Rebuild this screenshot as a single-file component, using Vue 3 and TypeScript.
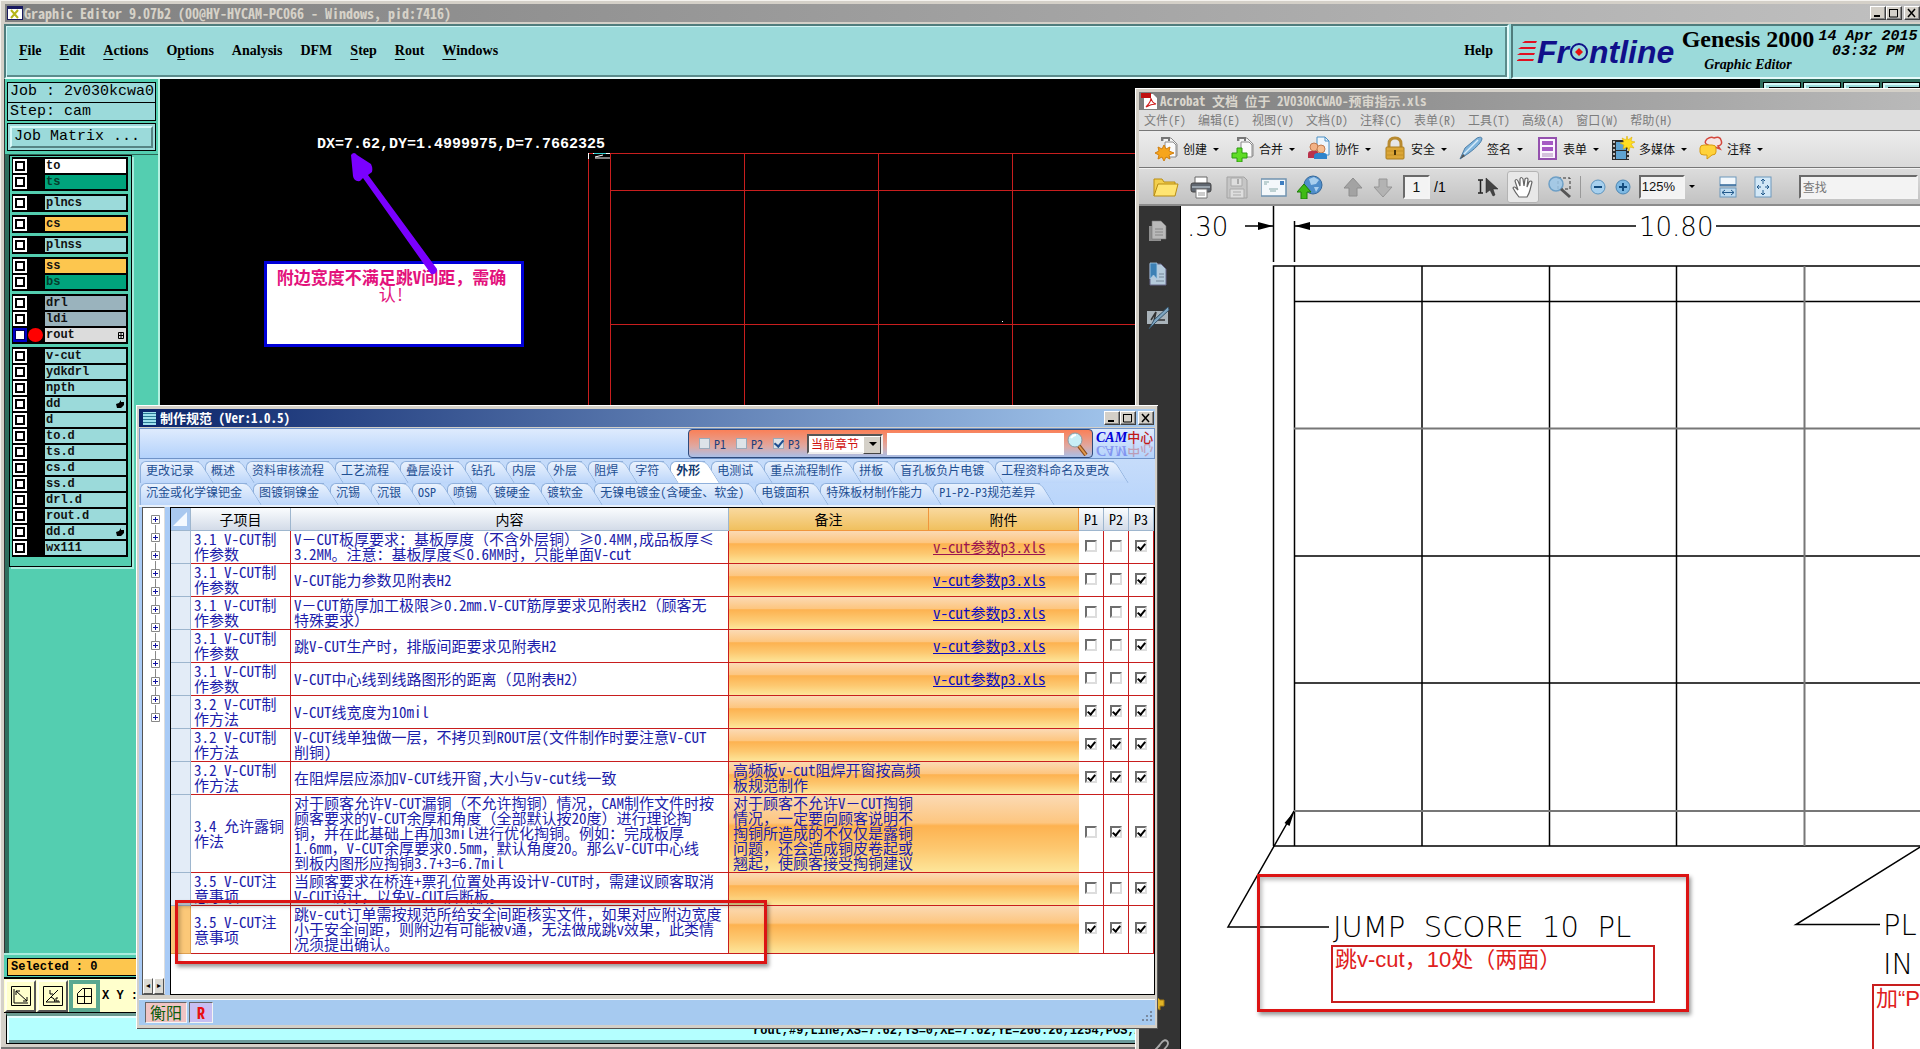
<script setup lang="ts">
import { ref } from 'vue'

interface Layer { name: string; tone: string; active?: boolean; mark?: string }
interface SpecRow { item: string; content: string; note?: string; file?: string; visited?: boolean; p: boolean[]; current?: boolean }
interface Tool { icon: string; label: string }

const genesisMenu = [
  ['F', 'ile', ''], ['E', 'dit', ''], ['A', 'ctions', ''], ['p', 'tions', 'O'], ['', 'Analysis', ''],
  ['', 'DFM', ''], ['S', 'tep', ''], ['R', 'out', ''], ['W', 'indows', ''],
]

const layerGroups: Layer[][] = [
  [{ name: 'to', tone: 'white' }, { name: 'ts', tone: 'green' }],
  [{ name: 'plncs', tone: 'cyan' }],
  [{ name: 'cs', tone: 'amber' }],
  [{ name: 'plnss', tone: 'cyan' }],
  [{ name: 'ss', tone: 'amber' }, { name: 'bs', tone: 'green' }],
  [{ name: 'drl', tone: 'slate' }, { name: 'ldi', tone: 'slate' }, { name: 'rout', tone: 'silver', active: true, mark: 'grid' }],
  [
    { name: 'v-cut', tone: 'cyan' }, { name: 'ydkdrl', tone: 'cyan' }, { name: 'npth', tone: 'cyan' },
    { name: 'dd', tone: 'cyan', mark: 'hand' }, { name: 'd', tone: 'cyan' }, { name: 'to.d', tone: 'cyan' },
    { name: 'ts.d', tone: 'cyan' }, { name: 'cs.d', tone: 'cyan' }, { name: 'ss.d', tone: 'cyan' },
    { name: 'drl.d', tone: 'cyan' }, { name: 'rout.d', tone: 'cyan' }, { name: 'dd.d', tone: 'cyan', mark: 'hand' },
    { name: 'wx111', tone: 'cyan' },
  ],
]

const acrobatMenu = ['文件(F)', '编辑(E)', '视图(V)', '文档(D)', '注释(C)', '表单(R)', '工具(T)', '高级(A)', '窗口(W)', '帮助(H)']

const tasks: Tool[] = [
  { icon: 'create', label: '创建' }, { icon: 'merge', label: '合并' }, { icon: 'collab', label: '协作' },
  { icon: 'lock', label: '安全' }, { icon: 'pen', label: '签名' }, { icon: 'form', label: '表单' },
  { icon: 'media', label: '多媒体' }, { icon: 'comment', label: '注释' },
]

const sheet = '<path d="M8 5V2h8l6 6v12h-6" fill="#f4f4f4" stroke="#8a8a8a"/><path d="M10 6h8l3 3v12H10z" fill="#fafafa" stroke="#8a8a8a"/><path d="M7 5V2h7v3" fill="none" stroke="#777" stroke-width="2"/>'
const icons: Record<string, string> = {
  create: sheet + '<path d="M9 9l2 4 4-2-1 4 5 2-5 2 1 4-4-2-2 4-2-4-4 2 1-4-4-2 4-2-1-4 4 2z" fill="#f7a51c" stroke="#d07f10"/>',
  merge: sheet + '<path d="M6 12h5v5h5v5h-5v4H6v-4H1v-5h5z" fill="#5fdc25" stroke="#2d9a10"/>',
  collab: '<path d="M10 1h8l4 4v14H10z" fill="#eef6fc" stroke="#4a8fc4"/><path d="M18 1v4h4" fill="none" stroke="#4a8fc4"/><circle cx="7" cy="11" r="4" fill="#f3b184" stroke="#c07b50"/><path d="M1 22v-4q0-3 3-3h7v7z" fill="#b9324b"/><circle cx="14" cy="13" r="4" fill="#f7bd90" stroke="#c07b50"/><path d="M7 23v-3q0-3 4-3h6q3 0 3 3v3z" fill="#2e84cc"/>',
  lock: '<path d="M6 12V8q0-6 6-6t6 6v4" fill="none" stroke="#b88a30" stroke-width="3"/><rect x="3" y="11" width="18" height="12" rx="1" fill="#dba637" stroke="#a97c1f"/><path d="M4 15h16M4 19h16" stroke="#c59128"/><path d="M11 14h2v5h-2z" fill="#493407"/>',
  pen: '<path d="M1 23l5-11L18 2q5-2 5 1-1 5-13 14z" fill="#7fb4dc" stroke="#4e7fa8"/><path d="M5 18L19 4" stroke="#d8ecf9" stroke-width="1.5"/><path d="M1 23l3-5 2 2z" fill="#555"/>',
  form: '<rect x="4" y="2" width="17" height="21" fill="#fbf5fe" stroke="#9450ae" stroke-width="2"/><path d="M7 7h11M7 13h11" stroke="#a558c4" stroke-width="4"/><path d="M7 18h11M7 20h11" stroke="#ad8cba"/>',
  media: '<path d="M1 4h17v20H1z" fill="#2b2b2b"/><path d="M5 6h10v8H5zM5 15h10v8H5z" fill="#5fa3d0"/><path d="M3 5v19M17 5v19" stroke="#eee" stroke-width="1.5" stroke-dasharray="2 2"/><path d="M16 0l1 4 4-3-1 4 4 1-4 2 3 4-4-1-1 4-2-4-4 2 1-4-4-2 4-1-2-4 4 2z" fill="#ffdf20" stroke="#e0b000" stroke-width=".6"/>',
  comment: '<path d="M8 3q4-3 7-1 6-2 7 2 2 5-3 6l2 3-5-2q-5 1-7-2-5-2-1-6z" fill="#f4e5e5" stroke="#d4473c" stroke-width="1.5"/><path d="M1 12q0-3 4-3h8q4 0 4 3v4q0 3-4 3l-5 4v-4H5q-4 0-4-3z" fill="#ffd23a" stroke="#d79a10"/>',
  folder: '<path d="M1 21V4h8l2 3h11v4" fill="#f3cf4e" stroke="#b98d13"/><path d="M1 21L5 9h20l-3 12z" fill="#ffe572" stroke="#b98d13"/>',
  print: '<path d="M6 9V2h12v7" fill="#fff" stroke="#666"/><rect x="2" y="8" width="20" height="9" rx="2" fill="#606770" stroke="#444"/><path d="M3 12h18" stroke="#9aa4ad" stroke-width="2"/><path d="M7 14h11v9H7z" fill="#fff" stroke="#777"/><path d="M9 18h7M9 20h7" stroke="#999"/>',
  save: '<path d="M2 2h17l3 3v18H2z" fill="#c6c6c6" stroke="#a2a2a2"/><path d="M6 3h11v8H6zM5 14h14v9H5z" fill="#dedede" stroke="#aaa"/><path d="M13 4v5" stroke="#aaa" stroke-width="2"/><path d="M8 17h8M8 20h8" stroke="#aaa"/>',
  mail: '<rect x="0" y="4" width="25" height="17" fill="#f4f8fb" stroke="#7093b0" stroke-width="1.5"/><rect x="19" y="6" width="4" height="4" fill="#3f7ec0"/><path d="M3 7h5M3 9h3M8 14h9M9 16h6" stroke="#8aa"/>',
  web: '<circle cx="16" cy="10" r="9" fill="#4f8ecb" stroke="#35689a"/><path d="M12 4l5-2 5 3-3 4-5 1zM17 12l5 0-3 5z" fill="#a9cfee"/><path d="M7 9l7 8h-4v7H4v-7H0z" fill="#3fbb16" stroke="#1d7d08"/>',
  up: '<path d="M12 3l9 10h-5v8H8v-8H3z" fill="#a3a3a3" stroke="#8e8e8e"/>',
  down: '<path d="M12 22l9-10h-5V4H8v8H3z" fill="#b3b3b3" stroke="#969696"/>',
  select: '<path d="M1 5h5M3.500 5v13M1 18h5" stroke="#222" stroke-width="1.5" fill="none"/><path d="M9 3v15l4-3 3 6 2-1-2-6h5z" fill="#444" stroke="#222" stroke-width=".5"/>',
  hand: '<path d="M8 22q-4-5-6-9 1-2 3 0l2 2L4 6q1-3 3 0l2 5V4q1-3 3 0l1 7 1-7q2-2 3 0l-1 8 2-5q2-2 3 0l-2 8q-1 4-3 7z" fill="#fff" stroke="#666" stroke-width="1.2"/>',
  marquee: '<path d="M11 3h12v11H11z" fill="none" stroke="#333" stroke-dasharray="3 2"/><circle cx="9" cy="9" r="7" fill="#9cc7e8" fill-opacity=".85" stroke="#6d9fc6" stroke-width="1.5"/><path d="M14 14l9 8" stroke="#555" stroke-width="3"/>',
  minus: '<circle cx="12" cy="12" r="7" fill="#a7d0ee" stroke="#5e95bf"/><path d="M8 12h8" stroke="#134b7d" stroke-width="2"/>',
  plus: '<circle cx="12" cy="12" r="7" fill="#7db8e2" stroke="#4b86b3"/><path d="M8 12h8M12 8v8" stroke="#134b7d" stroke-width="2"/>',
  fitw: '<rect x="4" y="2" width="16" height="9" fill="#f3f8fc" stroke="#6d98bc"/><path d="M4 10h16" stroke="#2f6698" stroke-width="1.5"/><rect x="4" y="13" width="16" height="9" fill="#bfdcf1" stroke="#6d98bc"/><path d="M6 17.500h12M9 15l-3 2.500 3 2.500M15 15l3 2.500-3 2.500" fill="none" stroke="#235a8c"/>',
  fitp: '<rect x="4" y="2" width="16" height="20" fill="#d3e8f7" stroke="#6d98bc"/><path d="M6 12h4M14 12h4M12 4v5M12 15v5M8 10l-2 2 2 2M16 10l2 2-2 2M10 6l2-2 2 2M10 18l2 2 2-2" fill="none" stroke="#235a8c"/>',
  pages: '<path d="M3 8h12v15H3z" fill="#8f8f8f"/><path d="M6 3h9l5 5v13H6z" fill="#b9b9b9" stroke="#777" stroke-width=".6"/><path d="M9 11h8M9 14h8M9 17h8" stroke="#888"/>',
  marks: '<path d="M4 2h11l5 5v16H4z" fill="#b5cbdc" stroke="#668"/><path d="M4 1h7v16l-3.500-4L4 17z" fill="#3c81b5" stroke="#a8cbe4" stroke-width=".8"/><path d="M13 12h5M13 15h5M10 19h8" stroke="#789"/>',
  sign: '<path d="M1 5h21v13H1z" fill="#a9b3ba"/><path d="M5 14l5-8-2 9 5-5-1 4h7" fill="none" stroke="#333" stroke-width="1.500"/><path d="M3 23l5-9L22 1l1 3L9 17z" fill="#7fa6c2" stroke="#38576e"/>',
  clip: '<path d="M5 18L16 5q3-3 5-1t0 5L10 22q-3 3-6 1t0-5L14 8" fill="none" stroke="#aaa" stroke-width="1.800"/>',
  note: '<path d="M0 4h11l3 3h4v6h-4v4l-5-3H0z" fill="#e0b326" stroke="#a67b10"/><path d="M2 8h8M2 11h8" stroke="#8a670c"/>',
}

const tabRows = [
  ['更改记录', '概述', '资料审核流程', '工艺流程', '叠层设计', '钻孔', '内层', '外层', '阻焊', '字符', '外形', '电测试', '重点流程制作', '拼板', '盲孔板负片电镀', '工程资料命名及更改'],
  ['沉金或化学镍钯金', '图镀铜镍金', '沉锡', '沉银', 'OSP', '喷锡', '镀硬金', '镀软金', '无镍电镀金(含硬金、软金)', '电镀面积', '特殊板材制作能力', 'P1-P2-P3规范差异'],
]
const activeTab = ref('外形')

const file = 'v-cut参数p3.xls'
const rows: SpecRow[] = [
  { item: '3.1 V-CUT制\n作参数', content: 'V－CUT板厚要求：基板厚度（不含外层铜）≥0.4MM,成品板厚≤\n3.2MM。注意：基板厚度≤0.6MM时，只能单面V-cut', file, visited: true, p: [false, false, true] },
  { item: '3.1 V-CUT制\n作参数', content: 'V-CUT能力参数见附表H2', file, p: [false, false, true] },
  { item: '3.1 V-CUT制\n作参数', content: 'V－CUT筋厚加工极限≥0.2mm.V-CUT筋厚要求见附表H2（顾客无\n特殊要求）', file, p: [false, false, true] },
  { item: '3.1 V-CUT制\n作参数', content: '跳V-CUT生产时，排版间距要求见附表H2', file, p: [false, false, true] },
  { item: '3.1 V-CUT制\n作参数', content: 'V-CUT中心线到线路图形的距离（见附表H2）', file, p: [false, false, true] },
  { item: '3.2 V-CUT制\n作方法', content: 'V-CUT线宽度为10mil', p: [true, true, true] },
  { item: '3.2 V-CUT制\n作方法', content: 'V-CUT线单独做一层，不拷贝到ROUT层(文件制作时要注意V-CUT\n削铜)', p: [true, true, true] },
  { item: '3.2 V-CUT制\n作方法', content: '在阻焊层应添加V-CUT线开窗,大小与v-cut线一致', note: '高频板v-cut阻焊开窗按高频\n板规范制作', p: [true, true, true] },
  { item: '3.4 允许露铜\n作法', content: '对于顾客允许V-CUT漏铜（不允许掏铜）情况，CAM制作文件时按\n顾客要求的V-CUT余厚和角度（全部默认按20度）进行理论掏\n铜，并在此基础上再加3mil进行优化掏铜。例如：完成板厚\n1.6mm，V-CUT余厚要求0.5mm，默认角度20。那么V-CUT中心线\n到板内图形应掏铜3.7+3=6.7mil', note: '对于顾客不允许V－CUT掏铜\n情况，一定要向顾客说明不\n掏铜所造成的不仅仅是露铜\n问题，还会造成铜皮卷起或\n翘起，使顾客接受掏铜建议', p: [false, true, true] },
  { item: '3.5 V-CUT注\n意事项', content: '当顾客要求在桥连+票孔位置处再设计V-CUT时，需建议顾客取消\nV-CUT设计，以免V-CUT后断板。', p: [false, false, true] },
  { item: '3.5 V-CUT注\n意事项', content: '跳v-cut订单需按规范所给安全间距核实文件，如果对应附边宽度\n小于安全间距，则附边有可能被v通，无法做成跳v效果，此类情\n况须提出确认。', p: [true, true, true], current: true },
]

const filters = ref([{ name: 'P1', on: false }, { name: 'P2', on: false }, { name: 'P3', on: true }])
</script>

<template>
  <div class="desktop">
    <section class="genesis">
      <header class="g-title">
        <svg class="g-icon" width="16" height="14" viewBox="0 0 16 14"><rect width="16" height="14" fill="#1a1a60"/><rect x="1" y="3" width="14" height="10" fill="#fff"/><path d="M4 4l7 8M11 4l-7 8" stroke="#b5b51a" stroke-width="2"/></svg>
        <span class="g-title-text">Graphic Editor 9.07b2 (00@HY-HYCAM-PC066 - Windows, pid:7416)</span>
        <div class="win-buttons">
          <button class="wb" aria-label="最小化"><svg width="12" height="10"><path d="M2 8h6" stroke="#000" stroke-width="2"/></svg></button>
          <button class="wb" aria-label="最大化"><svg width="12" height="10"><path d="M1 1.500h9M1.500 1v8h8V1" fill="none" stroke="#000"/></svg></button>
          <button class="wb close" aria-label="关闭"><svg width="12" height="10"><path d="M2 1l7 8M9 1L2 9" stroke="#000" stroke-width="1.500"/></svg></button>
        </div>
      </header>
      <div class="g-header">
        <nav class="g-menu">
          <button v-for="(m, i) in genesisMenu" :key="i">{{ m[2] }}<u>{{ m[0] }}</u>{{ m[1] }}</button>
          <button class="help">Help</button>
        </nav>
        <div class="brand">
          <div class="logo">
            <svg width="20" height="26" viewBox="0 0 20 26"><path d="M20 2H8l-3 2h14zM19 8H4l-3 2h17zM18 14H3l-3 2h17zM17 20H2l-3 2h17z" fill="#e01020"/></svg>
            <span class="logo-text">Fr<svg width="20" height="20" viewBox="0 0 20 20"><circle cx="10" cy="10" r="8" fill="none" stroke="#10108a" stroke-width="2"/><path d="M10 6l4 4-4 4-4-4z" fill="#e81010"/></svg>ntline</span>
          </div>
          <div class="product"><strong>Genesis 2000</strong><em>Graphic Editor</em></div>
          <div class="clock"><span>14 Apr 2015</span><span>03:32 PM</span></div>
        </div>
      </div>

      <div class="g-body">
        <aside class="g-side">
          <div class="job">
            <div class="job-line">Job : 2v030kcwa0</div>
            <div class="job-line">Step: cam</div>
          </div>
          <div class="matrix"><button>Job Matrix ...</button></div>
          <div class="layers">
            <div class="layer-list">
              <ul v-for="(g, gi) in layerGroups" :key="gi" class="layer-group">
                <li v-for="l in g" :key="l.name" :class="{ active: l.active }">
                  <input type="checkbox" :aria-label="l.name" />
                  <i class="dot"></i>
                  <span class="layer-name" :class="l.tone">{{ l.name }}
                    <svg v-if="l.mark === 'hand'" width="8" height="8" viewBox="0 0 8 8"><path d="M0 4l3-1 2-3 0 2 3 0v3l-3 3H1z" fill="#000"/></svg>
                    <svg v-else-if="l.mark" width="6" height="7" viewBox="0 0 6 7"><path d="M.5.500h5v6h-5zM3 0v7M0 3.500h6" fill="none" stroke="#000"/></svg>
                  </span>
                </li>
              </ul>
            </div>
          </div>
        </aside>
        <div class="canvas">
          <svg class="panel-lines" width="100%" height="100%">
            <g stroke="#c81e1e" stroke-width="1" shape-rendering="crispEdges">
              <path d="M428 74H1200M450 111.500H1200M450 245.500H1200M428.500 74V700M450.500 74V700M584.500 74V700M718.500 74V700M852.500 74V700" fill="none"/>
            </g>
            <path d="M428.500 74v6M433 74.500h17M435 79h15M435 78l8-2" fill="none" stroke="#fff"/>
            <path d="M434 74.500h12" stroke="#3cc"/>
            <rect x="842" y="242" width="1" height="1" fill="#fff"/>
          </svg>
          <span class="measure">DX=7.62,DY=1.4999975,D=7.7662325</span>
          <div class="remark"><p class="strong">附边宽度不满足跳V间距，需确</p><p>认!</p></div>
          <svg class="arrow" width="100" height="130" viewBox="0 0 100 130"><path d="M5 3q3-4 6 0l14 9q2 4 1 8l-4 3 69 94q0 6-6 5L17 26l-3 3q-6 1-7-5z" fill="#7a00ff"/></svg>
          <div class="side-tools"><i v-for="n in 4" :key="n"></i></div>
        </div>
      </div>

      <div class="selected"><span>Selected : 0</span></div>
      <div class="coords">
        <button aria-label="distance"><svg width="22" height="22" viewBox="0 0 22 22"><path d="M1.500 1.500h19v19h-19zM4 4v14h14M6 6l11 10M6 10V6h4M17 12v4h-4" fill="none" stroke="#000"/></svg></button>
        <button aria-label="angle"><svg width="22" height="22" viewBox="0 0 22 22"><path d="M1.500 1.500h19v19h-19zM4 17h14M4 17L16 5M8 5v4h3M9 12q4 1 4 5M16 13h-2v3h3" fill="none" stroke="#000"/></svg></button>
        <button class="on" aria-label="grid"><svg width="22" height="22" viewBox="0 0 22 22"><path d="M3.500 8.500l5-5h9v15h-14zM3 11.500h15M10.500 3v15" fill="none" stroke="#000"/></svg></button>
        <span>X Y :</span>
      </div>
      <div class="g-status"><span>rout,#9,Line,XS=7.62,YS=0,XE=7.62,YE=266.26,1254,POS,A</span></div>
    </section>

    <section class="acrobat">
      <header class="a-title">
        <svg width="16" height="16" viewBox="0 0 16 16"><path d="M3 1h9l4 4v11H3z" fill="#fff"/><path d="M0 0h10v5H0z" fill="#c01010"/><path d="M5 14q5-5 5-9 1 5 5 6-5 0-10 3z" fill="none" stroke="#d02020" stroke-width="1.200"/></svg>
        <span>Acrobat 文档 位于 2V030KCWAO-预审指示.xls</span>
      </header>
      <nav class="a-menu"><button v-for="m in acrobatMenu" :key="m">{{ m }}</button></nav>
      <div class="a-bar tasks">
        <i class="grip"></i>
        <button v-for="t in tasks" :key="t.icon" class="task">
          <svg width="24" height="26" viewBox="0 0 24 26" v-html="icons[t.icon]"></svg>{{ t.label }}<i class="caret"></i>
        </button>
      </div>
      <div class="a-bar tools">
        <i class="grip"></i>
        <div class="set file-set">
          <button v-for="n in ['folder', 'print', 'save', 'mail', 'web']" :key="n" :aria-label="n"><svg width="26" height="24" viewBox="0 0 26 24" v-html="icons[n]"></svg></button>
        </div>
        <i class="grip"></i>
        <div class="set page-set">
          <button aria-label="上一页"><svg width="24" height="24" viewBox="0 0 24 24" v-html="icons.up"></svg></button>
          <button aria-label="下一页"><svg width="24" height="24" viewBox="0 0 24 24" v-html="icons.down"></svg></button>
          <input class="page-no" aria-label="页码" value="1" /><span class="total">/1</span>
        </div>
        <i class="grip"></i>
        <div class="set view-set">
          <button aria-label="选择"><svg width="24" height="24" viewBox="0 0 24 24" v-html="icons.select"></svg></button>
          <button class="pressed" aria-label="手形"><svg width="24" height="24" viewBox="0 0 24 24" v-html="icons.hand"></svg></button>
          <button aria-label="选框缩放"><svg width="24" height="24" viewBox="0 0 24 24" v-html="icons.marquee"></svg></button>
          <i class="rule"></i>
          <button aria-label="缩小"><svg width="24" height="24" viewBox="0 0 24 24" v-html="icons.minus"></svg></button>
          <button aria-label="放大"><svg width="24" height="24" viewBox="0 0 24 24" v-html="icons.plus"></svg></button>
          <input class="zoom" aria-label="缩放" value="125%" /><i class="caret"></i>
        </div>
        <i class="grip"></i>
        <div class="set fit-set">
          <button aria-label="适合宽度"><svg width="24" height="24" viewBox="0 0 24 24" v-html="icons.fitw"></svg></button>
          <button aria-label="适合页面"><svg width="24" height="24" viewBox="0 0 24 24" v-html="icons.fitp"></svg></button>
        </div>
        <i class="grip"></i>
        <input class="find" aria-label="查找" placeholder="查找" />
      </div>
      <div class="a-body">
        <aside class="a-side">
          <button v-for="n in ['pages', 'marks', 'sign']" :key="n" :aria-label="n"><svg width="24" height="24" viewBox="0 0 24 24" v-html="icons[n]"></svg></button>
          <span class="spring"></span>
          <button aria-label="注释面板"><svg width="24" height="24" viewBox="0 0 24 24" v-html="icons.note"></svg></button>
          <button aria-label="附件面板"><svg width="24" height="24" viewBox="0 0 24 24" v-html="icons.clip"></svg></button>
        </aside>
        <div class="sheet">
          <svg width="100%" height="100%">
            <g fill="none" stroke="#000" stroke-width="1.500">
              <path d="M92.500 0V56M113.500 15V56M92.500 640V60H760M113.500 60V640M241 60V640M368.500 60V640M495.500 60V640M113 95.500H760M113 350H760M113 477H760M92 640H760"/>
              <path d="M64 20H92M114 20H455M535 20H760"/>
              <path d="M113 605L47 721H148M760 628L615 718.500H699"/>
            </g>
            <path d="M623.500 60V640M113 222.500H760M113 605H760" fill="none" stroke="#777" stroke-width="2"/>
            <path d="M92 20l-15-4v8zM114 20l15-4v8zM113.500 605l-10 12 5 3z" fill="#000"/>
            <g class="cad dims"><text x="6" y="30">.30</text><text x="458" y="30">10.80</text></g>
            <g class="cad">
              <text x="152" y="731">JUMP&#160; SCORE&#160; 10&#160; PL</text>
              <text x="702" y="729">PL</text><text x="702" y="768">IN</text>
            </g>
          </svg>
          <div class="markup jump">跳v-cut，10处（两面）</div>
          <div class="markup plus">加“P</div>
          <div class="callout score"></div>
        </div>
      </div>
    </section>

    <section class="spec">
      <header class="s-title">
        <svg width="13" height="13" viewBox="0 0 13 13"><rect width="13" height="13" fill="#9fe0ee"/><path d="M0 1.500h13M0 4.500h13M0 7.500h13M0 10.500h13" stroke="#2a7a96"/></svg>
        <span>制作规范 (Ver:1.0.5)</span>
        <div class="win-buttons">
          <button class="wb" aria-label="最小化"><svg width="12" height="10"><path d="M2 8h6" stroke="#000" stroke-width="2"/></svg></button>
          <button class="wb" aria-label="最大化"><svg width="12" height="10"><path d="M1 1.500h9M1.500 1v8h8V1" fill="none" stroke="#000"/></svg></button>
          <button class="wb close" aria-label="关闭"><svg width="12" height="10"><path d="M2 1l7 8M9 1L2 9" stroke="#000" stroke-width="1.500"/></svg></button>
        </div>
      </header>
      <div class="ribbon">
        <form class="search" @submit.prevent>
          <label v-for="f in filters" :key="f.name"><input v-model="f.on" type="checkbox" />{{ f.name }}</label>
          <span class="scope"><select aria-label="范围"><option>当前章节</option></select></span>
          <input class="query" aria-label="搜索" />
          <button class="go" aria-label="搜索"><svg width="22" height="24" viewBox="0 0 22 24"><circle cx="8" cy="8" r="7" fill="#c8eef6" stroke="#8a9aa4"/><path d="M4 6q2-3 5-3" stroke="#fff" stroke-width="2" fill="none"/><path d="M12 14l7 9" stroke="#8a4a18" stroke-width="4"/><path d="M12 14l7 9" stroke="#e09a50" stroke-width="2"/></svg></button>
        </form>
        <div class="cam"><span><b>CAM</b>中心</span><span class="mirror" aria-hidden="true"><b>CAM</b>中心</span></div>
      </div>
      <div class="tabs">
        <div v-for="(r, ri) in tabRows" :key="ri" class="tab-row">
          <button v-for="(t, i) in r" :key="t" class="tab" :class="{ current: t === activeTab }" :style="{ zIndex: 20 - i }" @click="activeTab = t"><span>{{ t }}</span></button>
        </div>
      </div>
      <div class="s-body">
        <div class="tree">
          <ul><li v-for="n in 12" :key="n"><button aria-label="展开"><svg width="9" height="9" viewBox="0 0 9 9"><path d="M.5.500h8v8h-8z" fill="#fff" stroke="#888"/><path d="M2 4.500h5M4.500 2v5" stroke="#1010a0"/></svg></button></li></ul>
          <div class="scroll"><button aria-label="左">◂</button><button aria-label="右">▸</button></div>
        </div>
        <div class="grid">
          <table>
            <colgroup><col class="c-sel" /><col class="c-item" /><col /><col class="c-note" /><col class="c-file" /><col class="c-p" /><col class="c-p" /><col class="c-p" /></colgroup>
            <thead>
              <tr><th class="corner"><svg width="16" height="18" viewBox="0 0 16 18"><path d="M16 2v14H2z" fill="#f4f9ff"/></svg></th><th>子项目</th><th>内容</th><th class="hot">备注</th><th class="hot">附件</th><th class="lv">P1</th><th class="lv">P2</th><th class="lv">P3</th></tr>
            </thead>
            <tbody>
              <tr v-for="(r, i) in rows" :key="i">
                <td class="sel" :class="{ now: r.current }"></td>
                <td>{{ r.item }}</td>
                <td>{{ r.content }}</td>
                <td class="warm">{{ r.note }}</td>
                <td class="warm"><a v-if="r.file" href="#" :class="{ visited: r.visited }">{{ r.file }}</a></td>
                <td v-for="(p, k) in r.p" :key="k" class="flag"><input type="checkbox" :checked="p" :aria-label="'P' + (k + 1)" /></td>
              </tr>
            </tbody>
          </table>
        </div>
      </div>
      <footer class="s-status"><span class="city">衡阳</span><span class="mode">R</span>
        <svg class="sizer" width="12" height="12" viewBox="0 0 12 12"><path d="M9 0h2v2H9zM5 4h2v2H5zM9 4h2v2H9zM1 8h2v2H1zM5 8h2v2H5zM9 8h2v2H9z" fill="#7a8aa0"/></svg>
      </footer>
      <div class="callout rule-row"></div>
    </section>
  </div>
</template>

<style>
body { margin: 0; background: #000; }
</style>

<style scoped>
* { box-sizing: border-box; }
button { margin: 0; padding: 0; border: 0; background: none; font: inherit; color: inherit; }
input, select { margin: 0; padding: 0; border-radius: 0; font: inherit; }
ul { list-style: none; margin: 0; padding: 0; }
p { margin: 0; }
svg { display: block; flex: none; }
i { font-style: normal; }

.desktop {
  position: relative; width: 100%; height: 100vh; overflow: hidden;
  font: 12px/14px "Noto Sans Mono CJK SC", "Noto Sans CJK SC", monospace;
}

/* Graphic editor */
.genesis { height: 100%; display: flex; flex-direction: column; padding: 4px 0 5px 4px; background: #d4d0c8; box-shadow: inset 1px 1px #f4f2ee, inset 0 -2px #777; }
.g-title { flex: none; height: 18px; margin: 0 0 2px 1px; padding-left: 2px; display: flex; align-items: center; background: linear-gradient(90deg, #808080, #c0c0c0); color: #d6d2c8; }
.g-title-text { flex: 1; margin-left: 1px; font-size: 14px; font-weight: 700; white-space: nowrap; }
.win-buttons { display: flex; margin-left: auto; }
.wb { width: 16px; height: 14px; display: grid; place-items: center; background: #d4d0c8; border: 1px solid; border-color: #fff #404040 #404040 #fff; box-shadow: inset -1px -1px #888; }
.wb.close { margin-left: 2px; }
.g-header { flex: none; height: 55px; display: flex; background: #9bdada; }
.g-menu { flex: 1; display: flex; align-items: center; gap: 18px; padding: 0 14px 2px 13px; font: 700 14px/18px "Liberation Serif", serif; color: #000; border: 2px solid; border-color: #4f7c7c #e6fbfb #e6fbfb #4f7c7c; box-shadow: inset 1px 1px #d2f6f6, inset -2px -2px #5b8c8c; }
.g-menu u { text-underline-offset: 4px; }
.g-menu .help { margin-left: auto; }
.brand { width: 409px; margin-left: 2px; padding-left: 4px; display: flex; border: 2px solid; border-right: 0; border-color: #4f7c7c #4f7c7c #e6fbfb #4f7c7c; }
.logo { width: 163px; display: flex; align-items: center; }
.logo-text { display: flex; align-items: center; font: italic 700 32px/32px "Liberation Sans", sans-serif; color: #10108a; }
.product { width: 136px; display: flex; flex-direction: column; align-items: center; font-family: "Liberation Serif", serif; white-space: nowrap; }
.product strong { font-size: 24px; line-height: 26px; }
.product em { margin-top: 4px; font-size: 14px; line-height: 18px; font-weight: 700; }
.clock { flex: 1; padding-top: 3px; display: flex; flex-direction: column; align-items: center; font: italic 700 15px/15px "Liberation Mono", monospace; white-space: nowrap; }

.g-body { flex: 1; min-height: 0; display: flex; }
.g-side { width: 156px; flex: none; display: flex; flex-direction: column; background: #54ceb0; border-right: 2px solid #b4f0e0; border-left: 1px solid #333; }
.job, .matrix { margin: 3px 2px 0; border: 1px solid #000; background: #9bdada; font: 15px/18px "Liberation Mono", monospace; white-space: nowrap; }
.job-line { height: 19px; padding-left: 2px; overflow: hidden; }
.job-line + .job-line { height: 18px; border-top: 1px solid #000; }
.matrix { padding: 2px; margin-top: 2px; }
.matrix button { width: 100%; height: 22px; padding-left: 2px; text-align: left; border: 2px solid; border-color: #d6f8f8 #568484 #568484 #d6f8f8; }
.layers { margin-top: 3px; border-top: 1px solid #2a6656; border-left: 4px solid #2f6e5e; flex: 1; }
.layer-list { width: 123px; padding: 1px 3px 9px 2px; border: 1px solid #000; box-shadow: 2px 2px #a8ecdc; display: flex; flex-direction: column; gap: 3px; }
.layer-group { background: #000; padding: 1px 2px 1px 1px; }
.layer-group li { height: 16px; display: flex; align-items: center; }
.layer-group input { appearance: none; width: 14px; height: 14px; background: #fff; border: 2px solid #fff; box-shadow: inset 0 0 0 2px #000; }
.active input { border-color: #0000c8; box-shadow: inset 0 0 0 1px #000060; }
.dot { width: 15px; height: 14px; margin: 0 2px 0 1px; border-radius: 50%; }
.active .dot { background: #f00; }
.layer-name { flex: 1; height: 14px; padding: 0 2px 0 1px; display: flex; align-items: center; justify-content: space-between; font: 700 12px/14px "Liberation Mono", monospace; color: #111; }
.white { background: #fff; } .green { background: #00a47c; color: #063c2c; } .cyan { background: #9bdada; }
.amber { background: #fdc64e; } .slate { background: #9ab3bd; } .silver { background: #dcdcdc; }

.canvas { flex: 1; min-width: 0; position: relative; background: #000; overflow: hidden; }
.panel-lines { position: absolute; inset: 0; }
.measure { position: absolute; left: 157px; top: 57px; font: 700 15px/18px "Liberation Mono", monospace; color: #fff; white-space: nowrap; }
.remark { position: absolute; left: 104px; top: 182px; width: 260px; height: 86px; padding: 4px 5px 0 0; border: 3px solid #0000d8; background: #fff; color: #e3127c; font-size: 17px; line-height: 17px; text-align: center; white-space: nowrap; }
.remark .strong { font-weight: 700; }
.arrow { position: absolute; left: 186px; top: 73px; }
.side-tools { position: absolute; top: 0; right: 0; width: 160px; height: 12px; display: flex; gap: 2px; padding: 3px 0 0 3px; background: #2f6e5e; }
.side-tools i { flex: 1; background: #9bdada; border: 1px solid #000; box-shadow: inset 2px 2px #d6f8f8, inset 5px 4px #9bdada, inset -4px 5px #000; }

.selected { flex: none; height: 26px; padding: 3px 2px 3px 3px; background: #54ceb0; border-bottom: 2px solid #000; border-top: 2px solid #a8ecdc; }
.selected span { display: block; height: 18px; padding-left: 3px; border: 1px solid #000; background: #fdc64e; font: 700 12px/16px "Liberation Mono", monospace; }
.coords { flex: none; height: 34px; display: flex; align-items: center; gap: 1px; padding-left: 1px; background: #ffffcc; border-bottom: 1px solid #000; font: 700 12px/16px "Liberation Mono", monospace; }
.coords button { width: 31px; height: 32px; display: grid; place-items: center; border: 2px solid; border-color: #fffff0 #555 #555 #fffff0; }
.coords button.on { border: 4px solid #5aa890; }
.coords span { margin-left: 1px; }
.g-status { flex: none; height: 31px; padding: 8px 0 0 746px; margin: 0 0 0 2px; border: 1px solid #000; border-top: 3px solid #6a9a90; background: #b4ffff; box-shadow: inset 2px 2px #e8ffff, inset 0 -3px #6a9a9a; font: 700 12px/14px "Liberation Mono", monospace; white-space: nowrap; }

/* Acrobat */
.acrobat { position: absolute; left: 1135px; right: 0; top: 88px; bottom: 0; display: flex; flex-direction: column; padding: 4px 0 0 4px; background: #d4d0c8; box-shadow: inset 1px 1px #fff; }
.a-title { flex: none; height: 18px; padding-left: 2px; display: flex; align-items: center; gap: 3px; background: linear-gradient(90deg, #7e7e7e, #b9b9b9); color: #dad6cd; font-size: 13px; font-weight: 700; white-space: nowrap; overflow: hidden; }
.a-menu { flex: none; height: 21px; padding: 0 0 0 5px; display: flex; gap: 12px; align-items: center; background: #dedede; color: #7c7c7c; border-bottom: 1px solid #777; white-space: nowrap; }
.a-bar { flex: none; display: flex; align-items: center; padding-left: 3px; border-bottom: 1px solid #777; }
.tasks { height: 37px; padding-left: 1px; background: linear-gradient(#ececec, #dadada); font: 12px/16px "Noto Sans CJK SC", sans-serif; color: #111; }
.tools { height: 38px; background: linear-gradient(#dcdcdc, #c2c2c2); border-top: 1px solid #f2f2f2; border-bottom: 2px solid #8c8c8c; }
.grip { flex: none; width: 3px; height: 22px; background-image: radial-gradient(#777 30%, transparent 40%); background-size: 2px 2px; opacity: .7; }
.task { display: flex; align-items: center; margin-left: 12px; white-space: nowrap; }
.task svg { margin-right: 4px; }
.caret { flex: none; width: 0; height: 0; margin-left: 6px; border: 3px solid transparent; border-top-color: #000; border-bottom: 0; }
.set { display: flex; align-items: center; font: 14px/18px "Liberation Sans", sans-serif; }
.file-set { gap: 10px; margin: 0 10px 0 8px; }
.page-set { gap: 6px; margin: 0 18px 0 5px; }
.page-no, .zoom, .find { height: 24px; border: 2px solid; border-color: #6a6a6a #f4f4f4 #f4f4f4 #6a6a6a; background: #f3f3f3; color: #111; }
.page-no { width: 27px; text-align: center; margin-left: 2px; }
.total { margin-left: -2px; margin-right: 2px; }
.view-set { gap: 1px; margin: 0 9px 0 8px; }
.view-set .pressed { width: 32px; height: 32px; margin: 0 7px 0 5px; display: grid; place-items: center; background: #e8e8e8; border: 1px solid #b4b4b4; border-radius: 3px; }
.rule { width: 1px; height: 22px; margin: 0 4px 0 8px; background: #999; }
.zoom { width: 46px; padding-left: 1px; margin-left: 3px; font-size: 13px; }
.view-set .caret { margin-left: 3px; }
.fit-set { gap: 11px; margin: 0 18px 0 9px; }
.find { flex: 1; min-width: 0; margin: 0 2px 0 3px; padding-left: 2px; font: 12px/16px "Noto Sans CJK SC", sans-serif; }
.find::placeholder { color: #777; }
.a-body { flex: 1; min-height: 0; display: flex; }
.a-side { width: 42px; flex: none; display: flex; flex-direction: column; align-items: center; gap: 20px; padding: 12px 4px 0 0; background: #333; border-right: 1px solid #000; }
.a-side .spring { flex: 1; }
.a-side button:last-child { margin-bottom: -12px; }
.sheet { flex: 1; min-width: 0; position: relative; background: #fff; overflow: hidden; }
.cad { font: 200 29px "DejaVu Sans Light", "DejaVu Sans", sans-serif; fill: #000; }
.dims { font-size: 26px; }
.markup { position: absolute; border: 2px solid #c81e1e; padding: 0 2px; font: 22px/26px "Liberation Sans", "Noto Sans CJK SC", sans-serif; color: #e02020; white-space: nowrap; }
.jump { left: 150px; top: 739px; width: 324px; height: 58px; }
.plus { left: 691px; top: 778px; width: 324px; height: 90px; }
.callout { position: absolute; border: 3px solid #dc1414; box-shadow: 2px 3px 4px #0006, inset 2px 3px 4px #0004; pointer-events: none; }
.score { left: 76px; top: 668px; width: 432px; height: 138px; }

/* Specification browser */
.spec { position: absolute; left: 136px; top: 405px; width: 1022px; display: flex; flex-direction: column; padding: 4px 3px; background: #d4d0c8; box-shadow: inset 1px 1px #fff, inset -1px -1px #555; }
.s-title { height: 18px; padding: 0 1px 0 4px; display: flex; align-items: center; gap: 4px; background: linear-gradient(90deg, #0a246a, #a6caf0); color: #fff; font-size: 13px; font-weight: 700; white-space: nowrap; }
.ribbon { height: 31px; margin-top: 1px; display: flex; border: 1px solid #6f93c8; background: linear-gradient(#dfebfd, #b3d2fb); }
.search { width: 405px; margin: 0 1px 0 auto; padding: 0 3px 0 10px; display: flex; align-items: center; border: 1px solid #2f4b7c; border-radius: 4px; background: linear-gradient(#fa8058, #e0a8a0 60%, #a9bfe8); color: #1d3f7d; }
.search label { display: flex; align-items: center; gap: 4px; margin-right: 10px; }
.search input[type='checkbox'] { appearance: none; width: 11px; height: 11px; border: 1px solid #9ab; background: #dde3e8; }
.search input[type='checkbox']:checked::after { content: ''; display: block; width: 4px; height: 7px; margin: -1px 0 0 2px; border: solid #1f4f90; border-width: 0 2px 2px 0; transform: rotate(40deg); }
.scope { position: relative; width: 76px; height: 20px; margin-left: -3px; }
.scope select { appearance: none; width: 100%; height: 100%; padding: 0 2px; border: 2px solid; border-color: #555 #eee #eee #555; background: #fff; color: #d01010; font: 12px/14px "Noto Sans CJK SC", sans-serif; }
.scope::before { content: ''; position: absolute; right: 2px; top: 2px; width: 16px; height: 16px; background: #d4d0c8; border: 1px solid; border-color: #fff #444 #444 #fff; pointer-events: none; }
.scope::after { content: ''; position: absolute; right: 6px; top: 8px; border: 4px solid transparent; border-top-color: #000; border-bottom: 0; pointer-events: none; }
.query { flex: 1; min-width: 0; height: 22px; margin: 0 3px 0 4px; border: 0; background: #fff; }
.cam { width: 60px; padding-left: 2px; font: 500 13px/15px "Noto Sans CJK SC", sans-serif; color: #c01818; white-space: nowrap; }
.cam span { display: block; height: 15px; }
.cam b { font: italic 700 14px/15px "Liberation Serif", serif; color: #0000d8; }
.cam .mirror { transform: scaleY(-1); opacity: .3; }
.tabs { padding: 2px 0 0 1px; background: linear-gradient(#c6dcfa, #b9d5fb); border-bottom: 2px solid #e8f1fc; }
.tab-row { height: 22px; display: flex; isolation: isolate; }
.tab { position: relative; height: 22px; padding: 0 11px 4px 6px; color: #1e4f93; white-space: nowrap; }
.tab::before, .tab::after { content: ''; position: absolute; top: 0; bottom: 0; border-top: 1px solid #8fb0dc; background: linear-gradient(#eaf2fd, #bcd6fa); }
.tab::before { left: 0; right: 6px; border-left: 1px solid #8fb0dc; border-radius: 6px 0 0 0; }
.tab::after { right: -2px; width: 16px; border-right: 1px solid #8fb0dc; border-radius: 0 6px 0 0; transform: skewX(32deg); }
.tab span { position: relative; z-index: 1; }
.current::before, .current::after { background: #fff; }
.current { font-weight: 700; color: #123a70; }
.s-body { height: 488px; display: flex; gap: 5px; background: #a9cbf6; padding-left: 3px; }
.tree { width: 23px; display: flex; flex-direction: column; justify-content: space-between; background: #fff; border: 1px solid #555; border-right-color: #ddd; }
.tree ul { margin: 7px 0 0 8px; }
.tree li { height: 18px; line-height: 0; background: linear-gradient(#888, #888) 4px 10px / 1px 8px no-repeat; }
.tree li:last-child { background: none; }
.scroll { display: flex; gap: 1px; }
.scroll button { flex: 1; height: 16px; background: #dcdad4; border: 1px solid; border-color: #fff #555 #555 #fff; font: 8px/12px "DejaVu Sans", sans-serif; color: #000; }
.grid { flex: 1; min-width: 0; border: 1px solid #000; background: #fff; }
table { width: 100%; table-layout: fixed; border-collapse: separate; border-spacing: 0; }
.c-sel { width: 20px; } .c-item { width: 100px; } .c-note { width: 200px; } .c-file { width: 150px; } .c-p { width: 25px; }
th { height: 23px; padding: 0; border-right: 1px solid #9eb6ce; border-bottom: 1px solid #9eb6ce; background: linear-gradient(#fafcfe, #d3dbe8); font: 14px/18px "Noto Sans CJK SC", sans-serif; color: #000; }
th.corner { background: #a9c8ef; }
th.hot { background: linear-gradient(#f9d99f, #f0c05e); border-color: #f0963c; }
th.lv { font: 14px/18px "Noto Sans Mono CJK SC", monospace; }
td { padding: 0 0 2px 3px; border-right: 1px solid #c81e1e; border-bottom: 1px solid #c81e1e; font-size: 15px; line-height: 15px; color: #1c1caa; white-space: pre; vertical-align: middle; }
td.sel { background: #e3ecf7; border-color: #9eb6ce; }
td.now { background: #fbc878; border-color: #e0a050; }
td.warm { padding-left: 4px; border-right: 0; background: linear-gradient(#fbdab4, #fdc680 36%, #fdb250 40%, #fdc870 70%, #fde69a); }
td.flag { padding: 0 0 3px; text-align: center; line-height: 0; }
.flag input { appearance: none; width: 12px; height: 12px; border: 2px solid; border-color: #6e6e6e #ddd #ddd #6e6e6e; background: #fff; vertical-align: middle; }
.flag input:checked::after { content: ''; display: block; width: 3px; height: 6px; margin: 0 0 0 2px; border: solid #000; border-width: 0 2px 2px 0; transform: rotate(40deg); }
a { color: #0c0cc0; text-decoration: underline; }
a.visited { color: #9a1550; }
.s-status { height: 25px; margin-top: 5px; padding: 2px 2px 2px 6px; display: flex; gap: 2px; align-items: stretch; background: #a6caf0; box-shadow: 0 -1px #fff; }
.s-status span { border: 1px solid; border-color: #666 #f4f4f4 #f4f4f4 #666; font-size: 16px; line-height: 19px; text-align: center; }
.city { width: 42px; background: #f0c4c4; color: #0c5c0c; font-weight: 500; }
.mode { width: 24px; background: #c8bff2; color: #e81010; font-weight: 700; }
.sizer { margin: auto 0 0 auto; }
.rule-row { left: 39px; top: 495px; width: 592px; height: 64px; }
</style>
